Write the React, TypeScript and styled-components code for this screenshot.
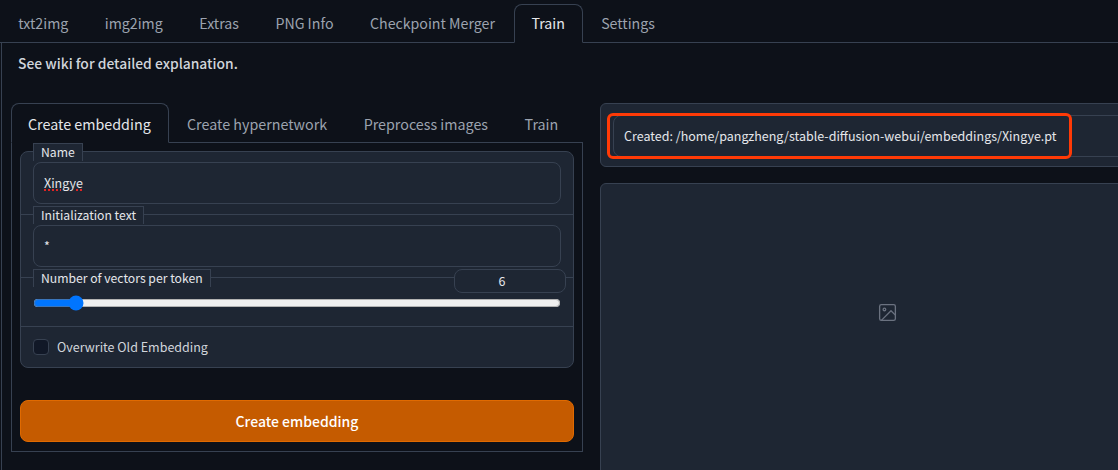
import styled, { createGlobalStyle } from 'styled-components';

const GlobalStyle = createGlobalStyle`
  html, body {
    margin: 0;
    padding: 0;
    background: #0d1119;
    overflow: hidden;
  }
  * {
    box-sizing: border-box;
  }
`;

const topTabs = ['txt2img', 'img2img', 'Extras', 'PNG Info', 'Checkpoint Merger', 'Train', 'Settings'];
const subTabs = ['Create embedding', 'Create hypernetwork', 'Preprocess images', 'Train'];

const App = () => {
  return (
    <Page>
      <GlobalStyle />
      <TopTabs>
        {topTabs.map((tab) => (
          <TopTab key={tab} $active={tab === 'Train'}>
            {tab}
          </TopTab>
        ))}
      </TopTabs>
      <Main>
        <Hint>See wiki for detailed explanation.</Hint>
        <Columns>
          <LeftColumn>
            <SubTabs>
              {subTabs.map((tab) => (
                <SubTab key={tab} $active={tab === 'Create embedding'}>
                  {tab}
                </SubTab>
              ))}
            </SubTabs>
            <SubPanel>
              <Form>
                <FieldRow>
                  <FieldLabel>Name</FieldLabel>
                  <TextField>
                    <Misspelled>Xingye</Misspelled>
                  </TextField>
                </FieldRow>
                <FieldRow>
                  <FieldLabel>Initialization text</FieldLabel>
                  <TextField>*</TextField>
                </FieldRow>
                <SliderRow>
                  <FieldLabel>Number of vectors per token</FieldLabel>
                  <NumberField>6</NumberField>
                  <Slider type="range" min={1} max={75} defaultValue={6} />
                </SliderRow>
                <CheckRow>
                  <CheckBox />
                  <CheckLabel>Overwrite Old Embedding</CheckLabel>
                </CheckRow>
              </Form>
              <CreateButton>Create embedding</CreateButton>
            </SubPanel>
          </LeftColumn>
          <RightColumn>
            <StatusPanel>
              <StatusField>Created: /home/pangzheng/stable-diffusion-webui/embeddings/Xingye.pt</StatusField>
              <Highlight />
            </StatusPanel>
            <Gallery>
              <svg width="21" height="21" viewBox="0 0 24 24" fill="none" stroke="#6b7280" strokeWidth="1.5" strokeLinecap="round" strokeLinejoin="round">
                <rect x="3" y="3" width="18" height="18" rx="2" ry="2" />
                <circle cx="8.5" cy="8.5" r="1.5" />
                <polyline points="21 15 16 10 5 21" />
              </svg>
            </Gallery>
          </RightColumn>
        </Columns>
      </Main>
    </Page>
  );
};

export default App;

const Page = styled.div`
  width: 1118px;
  height: 470px;
  overflow: hidden;
  background: #0d1119;
  color: #e5e7eb;
  font-family: 'Noto Sans CJK JP', 'Noto Sans', sans-serif;
  font-size: 14px;
`;

const TopTabs = styled.div`
  display: flex;
  align-items: flex-end;
  height: 43px;
  padding-top: 4px;
  border-bottom: 1px solid #374151;
`;

const TopTab = styled.div<{ $active?: boolean }>`
  height: ${(p) => (p.$active ? '39px' : '38px')};
  padding: ${(p) => (p.$active ? '0 17px 2px 16px' : '0 17.25px 2px')};
  display: flex;
  align-items: center;
  white-space: nowrap;
  font-size: 14.2px;
  color: ${(p) => (p.$active ? '#e5e7eb' : '#9ca3af')};
  border: 1px solid ${(p) => (p.$active ? '#374151' : 'transparent')};
  border-bottom: ${(p) => (p.$active ? '1px solid #0d1119' : 'none')};
  border-radius: ${(p) => (p.$active ? '8px 8px 0 0' : '0')};
  margin: ${(p) => (p.$active ? '0 0 -1px 1.25px' : '0')};
`;

const Main = styled.div`
  margin-left: 1px;
  width: 1200px;
  border-left: 1px solid #374151;
  padding: 10px 0 0 9px;
`;

const Hint = styled.div`
  padding-left: 7px;
  height: 20px;
  line-height: 20px;
  font-size: 13.85px;
  font-weight: 500;
  color: #d1d5db;
`;

const Columns = styled.div`
  display: flex;
  gap: 17px;
  margin-top: 30px;
`;

const LeftColumn = styled.div`
  width: 572px;
  flex: none;
`;

const SubTabs = styled.div`
  display: flex;
  align-items: flex-end;
  height: 40px;
  border-bottom: 1px solid #374151;
`;

const SubTab = styled.div<{ $active?: boolean }>`
  height: ${(p) => (p.$active ? '40px' : '39px')};
  padding: ${(p) => (p.$active ? '0 17px 0 16px' : '0 17.25px')};
  display: flex;
  align-items: center;
  white-space: nowrap;
  font-size: 14.3px;
  color: ${(p) => (p.$active ? '#e5e7eb' : '#9ca3af')};
  border: 1px solid ${(p) => (p.$active ? '#374151' : 'transparent')};
  border-bottom: ${(p) => (p.$active ? '1px solid #0d1119' : 'none')};
  border-radius: ${(p) => (p.$active ? '8px 8px 0 0' : '0')};
  margin-bottom: ${(p) => (p.$active ? '-1px' : '0')};
`;

const SubPanel = styled.div`
  border: 1px solid #374151;
  border-top: none;
  padding: 8px;
  height: 309px;
`;

const Form = styled.div`
  background: #1e2633;
  border: 1px solid #374151;
  border-radius: 8px;
  height: 217px;
`;

const FieldRow = styled.div`
  position: relative;
  height: 63px;
  padding: 10px 12px;
  border-bottom: 1px solid #374151;
`;

const FieldLabel = styled.div`
  position: absolute;
  left: 12px;
  top: -9px;
  height: 18px;
  padding: 0 7px;
  line-height: 17px;
  font-size: 12.2px;
  color: #e5e7eb;
  background: #1e2633;
  border: 1px solid #374151;
  border-bottom: none;
`;

const TextField = styled.div`
  height: 42px;
  padding: 0 10px 2px;
  display: flex;
  align-items: center;
  font-size: 12.5px;
  color: #e5e7eb;
  border: 1px solid #374151;
  border-radius: 8px;
`;

const Misspelled = styled.span`
  text-decoration: underline dotted #e02424 2px;
  text-underline-offset: 2px;
`;

const SliderRow = styled.div`
  position: relative;
  height: 49px;
  padding: 17px 12px 0;
  border-bottom: 1px solid #374151;
`;

const NumberField = styled.div`
  position: absolute;
  right: 7px;
  top: -9px;
  width: 112px;
  height: 24px;
  padding: 0 16px 2px 0;
  display: flex;
  align-items: center;
  justify-content: center;
  font-size: 12.5px;
  background: #1e2633;
  border: 1px solid #374151;
  border-radius: 8px;
`;

const Slider = styled.input`
  display: block;
  width: 528px;
  height: 16px;
  margin: 0;
`;

const CheckRow = styled.div`
  display: flex;
  align-items: center;
  gap: 8px;
  height: 40px;
  padding: 0 12px;
`;

const CheckBox = styled.div`
  width: 16px;
  height: 16px;
  background: #111827;
  border: 1px solid #374151;
  border-radius: 4px;
`;

const CheckLabel = styled.span`
  padding-bottom: 2px;
  font-size: 12.5px;
  color: #d1d5db;
`;

const CreateButton = styled.div`
  margin-top: 32px;
  height: 42px;
  display: flex;
  align-items: center;
  justify-content: center;
  font-size: 14px;
  font-weight: 500;
  color: #fff;
  background: #c55b00;
  border: 1px solid #e06a00;
  border-radius: 8px;
`;

const RightColumn = styled.div`
  width: 574px;
  flex: none;
  display: flex;
  flex-direction: column;
  gap: 16px;
`;

const StatusPanel = styled.div`
  position: relative;
  height: 64px;
  padding: 11px 12px 0;
  background: #1e2633;
  border: 1px solid #374151;
  border-radius: 6px;
`;

const StatusField = styled.div`
  height: 42px;
  padding: 0 10px 2px;
  display: flex;
  align-items: center;
  font-size: 12.5px;
  color: #e5e7eb;
  border: 1px solid #374151;
  border-radius: 8px;
`;

const Highlight = styled.div`
  position: absolute;
  left: 6px;
  top: 9px;
  width: 465px;
  height: 46px;
  border: 3px solid #ff3a06;
  border-radius: 6px;
`;

const Gallery = styled.div`
  height: 300px;
  padding-bottom: 42px;
  display: flex;
  align-items: center;
  justify-content: center;
  background: #1e2633;
  border: 1px solid #374151;
  border-radius: 6px;
`;
